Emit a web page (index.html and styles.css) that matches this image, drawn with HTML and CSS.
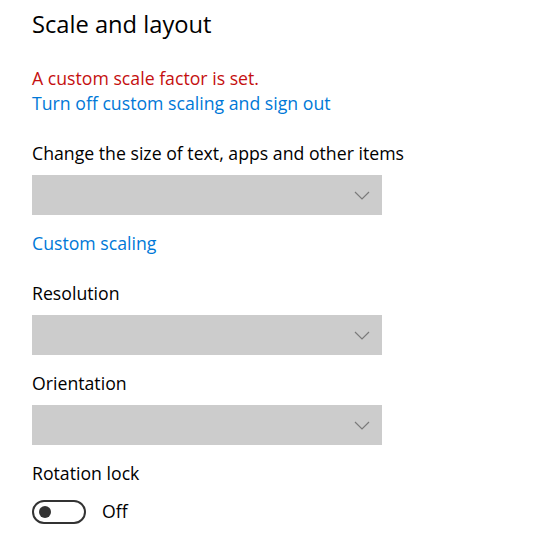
FILE: index.html
```html
<!DOCTYPE html>
<html lang="en">
<head>
<meta charset="utf-8">
<title>Scale and layout</title>
<link rel="stylesheet" href="styles.css">
</head>
<body>
<main class="page">
  <h1 class="title">Scale and layout</h1>

  <section class="notice">
    <p class="warning">A custom scale factor is set.</p>
    <a class="link" href="#">Turn off custom scaling and sign out</a>
  </section>

  <section class="field">
    <label class="label">Change the size of text, apps and other items</label>
    <div class="combo">
      <svg class="chevron" width="16" height="9" viewBox="0 0 16 9"><path d="M1 1 L8 8 L15 1" fill="none" stroke="#7a7a7a" stroke-width="1.2"/></svg>
    </div>
  </section>

  <a class="link link-block" href="#">Custom scaling</a>

  <section class="field field-gap">
    <label class="label">Resolution</label>
    <div class="combo">
      <svg class="chevron" width="16" height="9" viewBox="0 0 16 9"><path d="M1 1 L8 8 L15 1" fill="none" stroke="#7a7a7a" stroke-width="1.2"/></svg>
    </div>
  </section>

  <section class="field field-tight">
    <label class="label">Orientation</label>
    <div class="combo">
      <svg class="chevron" width="16" height="9" viewBox="0 0 16 9"><path d="M1 1 L8 8 L15 1" fill="none" stroke="#7a7a7a" stroke-width="1.2"/></svg>
    </div>
  </section>

  <section class="field field-tight">
    <label class="label">Rotation lock</label>
    <div class="toggle-row">
      <span class="toggle"><span class="knob"></span></span>
      <span class="toggle-text">Off</span>
    </div>
  </section>
</main>
</body>
</html>
```

FILE: styles.css
```css
* { box-sizing: border-box; }
html, body { margin: 0; padding: 0; background: #ffffff; }
body {
  font-family: "Open Sans", "Noto Sans", sans-serif;
  font-size: 17.7px;
  line-height: 25px;
  color: #000000;
}
.page {
  padding: 8px 32px 0 32px;
  display: flex;
  flex-direction: column;
  align-items: flex-start;
}
.title {
  margin: 0;
  font-size: 23.7px;
  font-weight: 400;
  line-height: 32px;
}
.notice {
  margin-top: 26px;
  display: flex;
  flex-direction: column;
  align-items: flex-start;
}
.warning {
  margin: 0;
  color: #c50f0f;
}
.link {
  color: #0078d7;
  text-decoration: none;
}
.field {
  margin-top: 25px;
  display: flex;
  flex-direction: column;
  align-items: flex-start;
}
.field-gap { margin-top: 25px; }
.field-tight { margin-top: 16px; }
.label { display: block; }
.combo {
  margin-top: 9px;
  width: 350px;
  height: 40px;
  background: #cccccc;
  display: flex;
  align-items: center;
  justify-content: flex-end;
  padding-right: 12px;
}
.chevron { display: block; }
.link-block { margin-top: 16px; }
.toggle-row {
  margin-top: 13px;
  display: flex;
  align-items: center;
  gap: 16px;
}
.toggle {
  width: 54px;
  height: 24px;
  border: 2px solid #333333;
  border-radius: 12px;
  display: flex;
  align-items: center;
  padding-left: 5px;
}
.knob {
  width: 12px;
  height: 12px;
  border-radius: 50%;
  background: #333333;
}
```
